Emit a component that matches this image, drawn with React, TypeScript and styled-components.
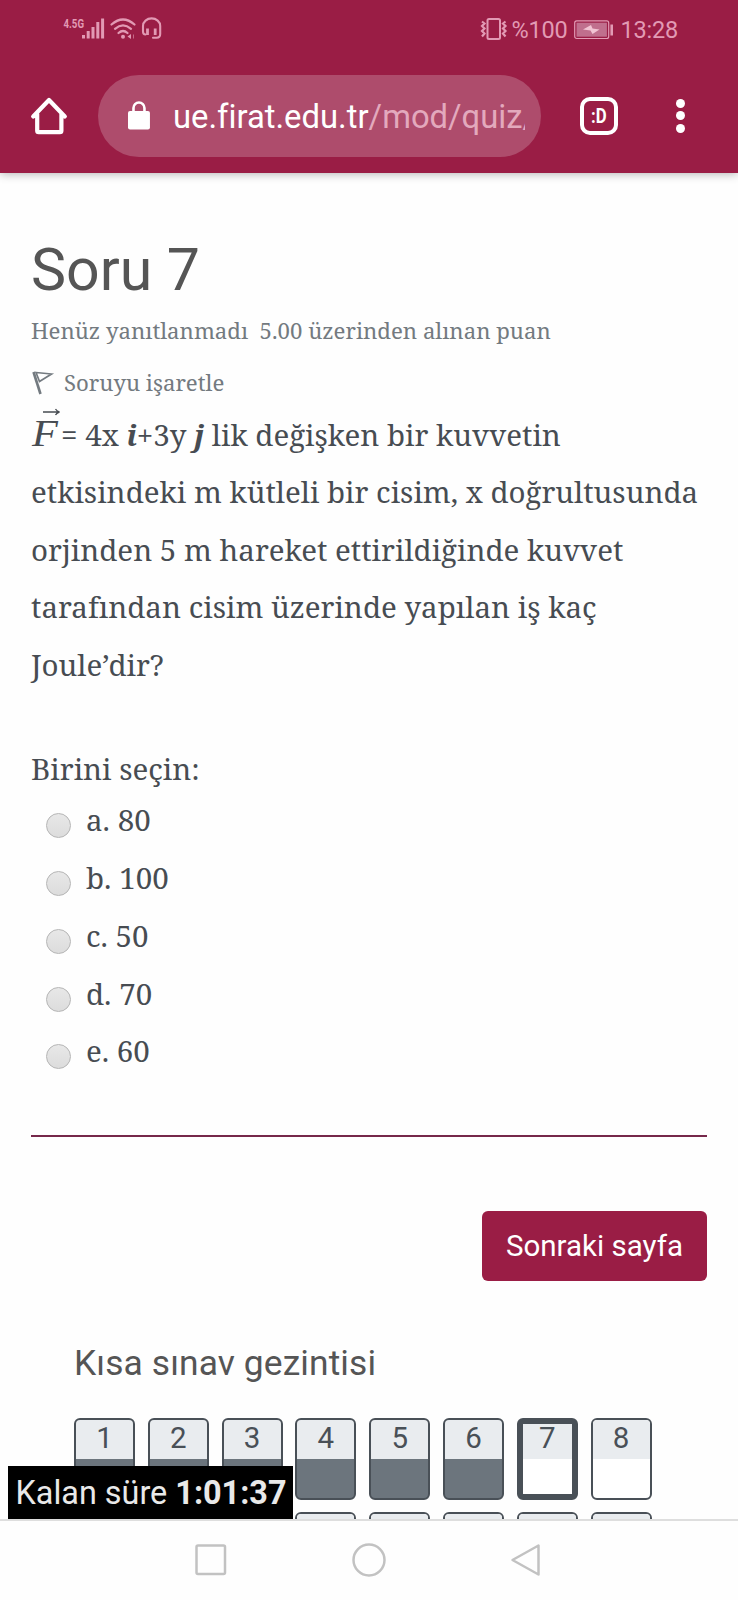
import React from "react";
import styled, { createGlobalStyle } from "styled-components";

const sans = `Roboto, "Liberation Sans", sans-serif`;
const serif = `"Noto Serif", "DejaVu Serif Condensed", "DejaVu Serif", serif`;

const GlobalStyle = createGlobalStyle`
  * { box-sizing: border-box; }
  body { margin: 0; background: #fefefe; font-family: ${sans}; }
`;

const Screen = styled.div`
  width: 738px;
  height: 1600px;
  display: flex;
  flex-direction: column;
  overflow: hidden;
  background: #fefefe;
`;

const Header = styled.header`
  flex: none;
  height: 173px;
  background: #9a1d45;
  box-shadow: 0 1px 9px rgba(0, 0, 0, 0.3);
`;

const StatusBar = styled.div`
  height: 58px;
  padding: 0 60px 0 62px;
  display: flex;
  justify-content: space-between;
  color: #e29ab4;
`;

const StatusGroup = styled.div`
  display: flex;
  align-items: center;
`;

const StatusText = styled.span<{ $gap: number }>`
  font-size: 23.5px;
  line-height: 28px;
  padding-top: 1px;
  letter-spacing: -0.2px;
  margin-left: ${(p) => p.$gap}px;
`;

const Toolbar = styled.div`
  height: 115px;
  display: flex;
  align-items: center;
  padding: 0 53px 0 30px;
`;

const AddressBar = styled.div`
  width: 443px;
  height: 82px;
  margin: 0 39px 0 30px;
  padding: 0 16px 0 29px;
  border-radius: 41px;
  background: #ae4c6c;
  display: flex;
  align-items: center;
`;

const Url = styled.div`
  width: 353px;
  margin-left: 22px;
  padding-top: 2px;
  overflow: hidden;
  white-space: nowrap;
  font-size: 32.8px;
  line-height: 44px;
  font-variant-ligatures: none;
  color: #fff;
`;

const UrlPath = styled.span`
  color: #e3a9bd;
`;

const TabButton = styled.div`
  width: 38px;
  height: 38px;
  border: 4px solid #fff;
  border-radius: 10px;
  display: flex;
  align-items: center;
  justify-content: center;
  color: #fff;
  font-size: 21px;
  line-height: 24px;
  font-weight: 700;
`;

const TabLabel = styled.span`
  display: block;
  transform: scaleX(0.8);
`;

const MenuDots = styled.div`
  margin-left: auto;
  display: flex;
  flex-direction: column;
  gap: 3.5px;
`;

const Dot = styled.i`
  width: 9px;
  height: 9px;
  border-radius: 50%;
  background: #fff;
`;

const Content = styled.main`
  flex: 1;
  min-height: 0;
  overflow: hidden;
  position: relative;
  padding: 61px 31px 0;
`;

const Title = styled.h1`
  margin: 0;
  font-weight: 400;
  font-size: 59px;
  line-height: 72px;
  color: #555;
`;

const Meta = styled.div<{ $top: number }>`
  margin-top: ${(p) => p.$top}px;
  height: 34px;
  display: flex;
  align-items: center;
  font-family: ${serif};
  font-size: 22.2px;
  line-height: 34px;
  white-space: pre;
  color: #737a80;
`;

const Question = styled.div`
  margin-top: 6px;
  font-family: ${serif};
  font-size: 29.5px;
  color: #474c52;
`;

const Line = styled.div`
  height: 57.4px;
  line-height: 57.4px;
  white-space: pre;
`;

const Vector = styled.span`
  position: relative;
  display: inline-block;
  width: 30px;
  line-height: 40px;
  font-family: "Liberation Serif", serif;
  font-style: italic;
  font-size: 38.5px;
`;

const VectorLetter = styled.span`
  display: inline-block;
  transform: scaleX(1.1);
  transform-origin: left;
  margin-left: 1px;
`;

const VectorArrow = styled.svg`
  position: absolute;
  left: 12px;
  top: -5px;
`;

const Unit = styled.b`
  font-style: italic;
`;

const Prompt = styled(Line)`
  margin-top: 47px;
`;

const Options = styled.div`
  margin-top: -6.5px;
`;

const Option = styled.label`
  height: 57.8px;
  display: flex;
  align-items: center;
  padding-left: 15px;
`;

const Radio = styled.span`
  width: 25px;
  height: 25px;
  margin: 12px 15px 0 0;
  border-radius: 50%;
  border: 1px solid #b5b5b5;
  background: linear-gradient(#e8e8e8, #dcdcdc);
`;

const Rule = styled.hr`
  margin: 55.5px 0 74px;
  border: 0;
  height: 2px;
  background: #76284a;
`;

const NextButton = styled.button`
  display: block;
  margin: 0 0 0 auto;
  width: 225px;
  height: 70px;
  padding: 0;
  border: 0;
  border-radius: 6px;
  background: #9a1d45;
  color: #fff;
  font-family: ${sans};
  font-size: 29.52px;
`;

const NavTitle = styled.h2`
  margin: 61px 0 34px 43px;
  font-weight: 400;
  font-size: 35.4px;
  line-height: 42px;
  letter-spacing: 0.1px;
  color: #555;
`;

const Grid = styled.div`
  margin-left: 43px;
  display: grid;
  grid-template-columns: repeat(8, 61px);
  column-gap: 12.8px;
  row-gap: 12px;
`;

const Cell = styled.div<{ $answered: boolean; $current: boolean }>`
  height: 82px;
  border: ${(p) => (p.$current ? 6 : 2)}px solid #495057;
  border-radius: 6px;
  overflow: hidden;
  background: ${(p) => (p.$answered ? "#6c757d" : "#fff")};
`;

const CellNumber = styled.div<{ $current: boolean }>`
  height: ${(p) => (p.$current ? 35 : 39)}px;
  line-height: ${(p) => (p.$current ? 29 : 37)}px;
  background: #e9ecef;
  text-align: center;
  font-size: 29.5px;
  color: #495057;
`;

const Timer = styled.div`
  position: absolute;
  left: 8px;
  bottom: 0;
  width: 284.5px;
  height: 53px;
  padding-left: 7.5px;
  background: #000;
  color: #e9e9e9;
  font-size: 32.4px;
  line-height: 54px;
  white-space: pre;
`;

const NavBar = styled.nav`
  flex: none;
  height: 81px;
  border-top: 2px solid #dedede;
  display: flex;
  justify-content: center;
  align-items: center;
  gap: 125px;
  padding: 0 1px 2px 0;
`;

const questionLines = [
  "etkisindeki m kütleli bir cisim, x doğrultusunda",
  "orjinden 5 m hareket ettirildiğinde kuvvet",
  "tarafından cisim üzerinde yapılan iş kaç",
  "Joule’dir?",
];

const options = ["a. 80", "b. 100", "c. 50", "d. 70", "e. 60"];

const cells = Array.from({ length: 16 }, (_, i) => i + 1);

const StatusLeft = () => (
  <svg width="104" height="30" viewBox="0 0 104 30" fill="none" stroke="#e29ab4">
    <text
      x="1.500"
      y="13.500"
      fontFamily="Roboto"
      fontSize="13"
      fontWeight="700"
      fill="#e29ab4"
      stroke="none"
      textLength="20.500"
      lengthAdjust="spacingAndGlyphs"
    >
      4.5G
    </text>
    <g strokeWidth="3">
      <path d="M21.500 21v3.500M26.200 17v7.500M31 13v11.500M35.800 8v16.500M40.600 4.500v20" />
    </g>
    <g strokeWidth="2.200" strokeLinecap="round">
      <path d="M49.500 10.500q11.500-10 23 0M53 14.800q8-6.800 16 0M56.500 19q4.500-4 9 0" />
    </g>
    <circle cx="61" cy="22.700" r="2" fill="#e29ab4" stroke="none" />
    <path d="M69 20v5l-3.500-2.500z" fill="#e29ab4" stroke="none" />
    <path d="M71.500 20.500v4" strokeWidth="1" opacity=".6" />
    <path
      d="M83.500 20.500q-2.500 0-2.500-3v-5.500a8.600 7.600 0 0 1 17.200 0v8q0 3.700-3.700 3.700h-3.500"
      strokeWidth="2.100"
      strokeLinecap="round"
    />
    <path d="M85.500 14.500v6.500M93.200 14.500v6.500" strokeWidth="2.800" />
  </svg>
);

const VibrateIcon = () => (
  <svg width="30" height="24" viewBox="0 0 30 24" fill="none" stroke="#e29ab4" strokeWidth="2">
    <rect x="8.500" y="2" width="12.500" height="20" rx="1.500" />
    <path
      d="M3 4.500l2.500 2-2.500 2.500 2.500 2.500-2.500 2.500 2.500 2.500-2.500 3M26.500 4.500l-2.500 2 2.500 2.500-2.500 2.500 2.500 2.500-2.500 2.500 2.500 3"
      strokeWidth="2.200"
    />
  </svg>
);

const BatteryIcon = styled.svg`
  margin: 1px 0 0 7px;
`;

const Battery = () => (
  <BatteryIcon width="40" height="20" viewBox="0 0 40 20">
    <rect x=".7" y=".9" width="34" height="17.600" rx="2" fill="#9a1d45" stroke="#e29ab4" strokeWidth="1.200" />
    <rect x="2.500" y="2.700" width="30.400" height="14" fill="#c06f8d" />
    <path d="M9 9.500L17 5l1.500 3.500 7 1L18.500 14l-2-3.500z" fill="#f1c4d3" />
    <path d="M37.700 4.500v11" stroke="#e29ab4" strokeWidth="2.600" />
  </BatteryIcon>
);

const HomeIcon = () => (
  <svg
    width="38"
    height="40"
    viewBox="0 0 38 40"
    fill="none"
    stroke="#fff"
    strokeWidth="4.200"
    strokeLinecap="round"
    strokeLinejoin="round"
  >
    <path d="M3.200 20.500L19 4l15.800 16.500M7.200 18v16.700q0 1.500 1.500 1.500h21.200q1.500 0 1.500-1.500V18" />
    <path d="M4 20.500h3M31.500 20.500h3" strokeWidth="3" />
  </svg>
);

const LockIcon = () => (
  <svg width="24" height="30" viewBox="0 0 24 30">
    <rect x="1" y="10" width="22" height="18.500" rx="2" fill="#fff" />
    <path d="M6.500 12V7a5.500 5.500 0 0 1 11 0V12" fill="none" stroke="#fff" strokeWidth="2.600" />
  </svg>
);

const FlagIcon = () => (
  <svg width="33" height="26" viewBox="0 0 33 26" fill="none" stroke="#737a80">
    <path d="M2.500 2l7 22" strokeWidth="2.600" />
    <path d="M5 2.500l15.500 1.500L8.500 11.500z" strokeWidth="1.700" />
  </svg>
);

export default function App() {
  return (
    <Screen>
      <GlobalStyle />
      <Header>
        <StatusBar>
          <StatusGroup>
            <StatusLeft />
          </StatusGroup>
          <StatusGroup>
            <VibrateIcon />
            <StatusText $gap={2}>%100</StatusText>
            <Battery />
            <StatusText $gap={6}>13:28</StatusText>
          </StatusGroup>
        </StatusBar>
        <Toolbar>
          <HomeIcon />
          <AddressBar>
            <LockIcon />
            <Url>
              ue.firat.edu.tr<UrlPath>/mod/quiz/</UrlPath>
            </Url>
          </AddressBar>
          <TabButton>
            <TabLabel>:D</TabLabel>
          </TabButton>
          <MenuDots>
            <Dot />
            <Dot />
            <Dot />
          </MenuDots>
        </Toolbar>
      </Header>
      <Content>
        <Title>Soru 7</Title>
        <Meta $top={8}>Henüz yanıtlanmadı  5.00 üzerinden alınan puan</Meta>
        <Meta $top={18}>
          <FlagIcon />
          Soruyu işaretle
        </Meta>
        <Question>
          <Line>
            <Vector>
              <VectorLetter>F</VectorLetter>
              <VectorArrow width="18" height="8" viewBox="0 0 18 8" fill="none" stroke="#474c52" strokeWidth="1.300">
                <path d="M0 4h16M12.500 1q1.500 2.500 4 3q-2.500.5-4 3" />
              </VectorArrow>
            </Vector>
            = 4x <Unit>i</Unit>+3y <Unit>j</Unit> lik değişken bir kuvvetin
          </Line>
          {questionLines.map((text) => (
            <Line key={text}>{text}</Line>
          ))}
          <Prompt>Birini seçin:</Prompt>
          <Options>
            {options.map((o) => (
              <Option key={o}>
                <Radio />
                {o}
              </Option>
            ))}
          </Options>
        </Question>
        <Rule />
        <NextButton>Sonraki sayfa</NextButton>
        <NavTitle>Kısa sınav gezintisi</NavTitle>
        <Grid>
          {cells.map((n) => (
            <Cell key={n} $answered={n < 7} $current={n === 7}>
              <CellNumber $current={n === 7}>{n < 9 ? n : null}</CellNumber>
            </Cell>
          ))}
        </Grid>
        <Timer>
          Kalan süre <b>1:01:37</b>
        </Timer>
      </Content>
      <NavBar>
        <svg width="32" height="32" fill="none" stroke="#c2c2c2" strokeWidth="2.500">
          <rect x="1.500" y="1.500" width="28.500" height="28.500" rx="1.500" />
        </svg>
        <svg width="34" height="34" fill="none" stroke="#c2c2c2" strokeWidth="2.500">
          <circle cx="17" cy="17" r="15.500" />
        </svg>
        <svg width="32" height="34" fill="none" stroke="#c2c2c2" strokeWidth="2.500" strokeLinejoin="round">
          <path d="M27.500 2.500v29L1.500 17z" />
        </svg>
      </NavBar>
    </Screen>
  );
}
